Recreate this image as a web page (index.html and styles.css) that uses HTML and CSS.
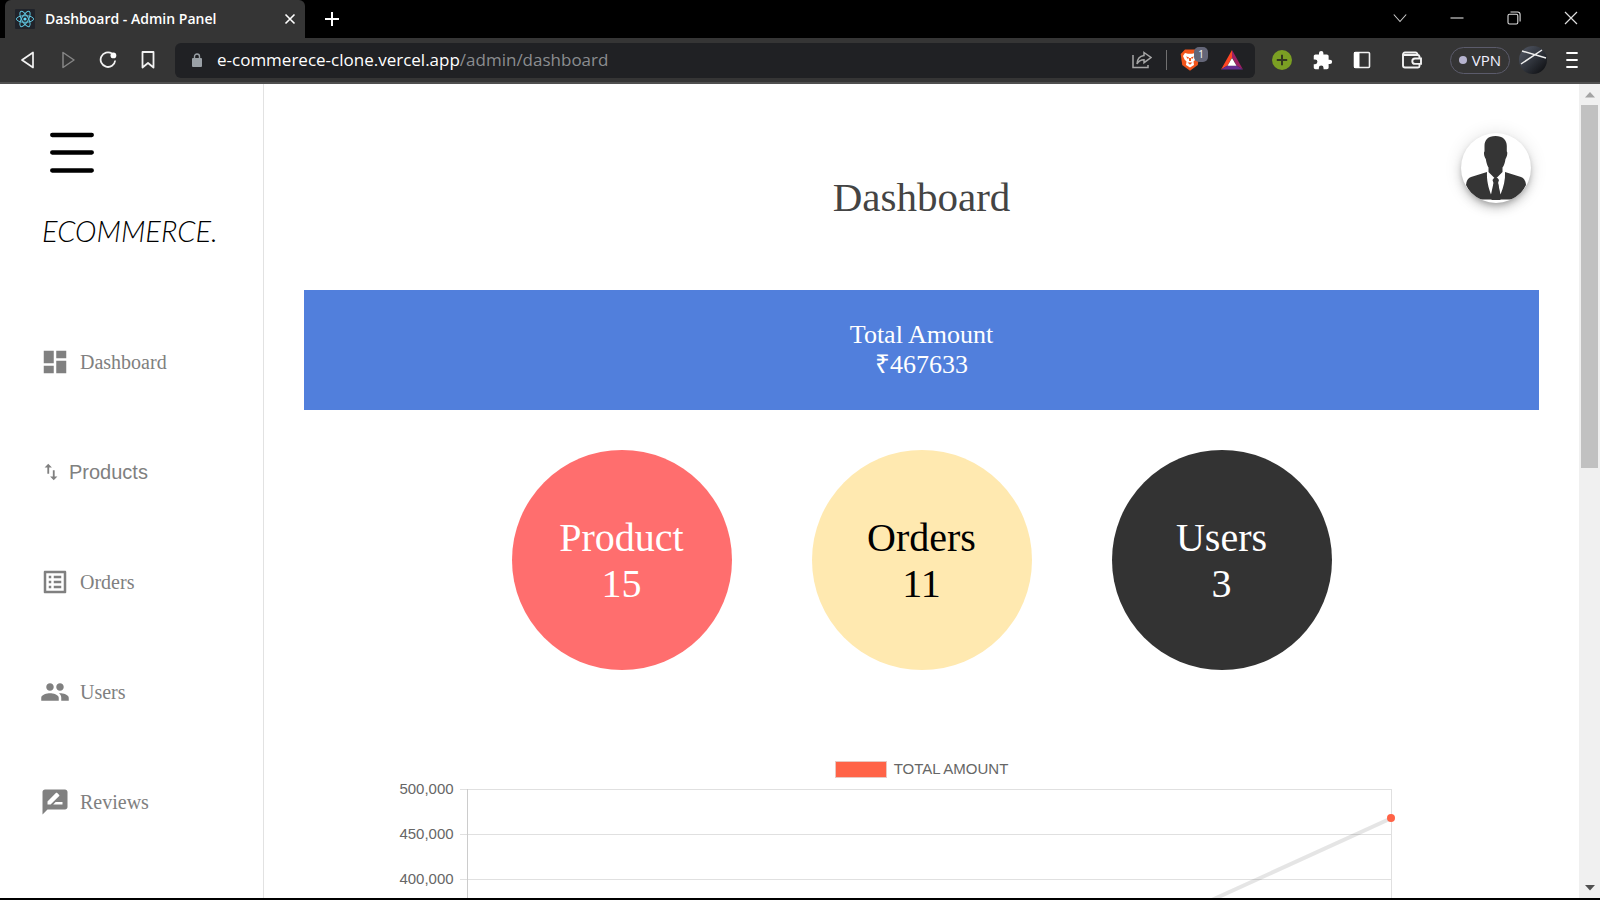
FILE: index.html
```html
<!DOCTYPE html>
<html lang="en">
<head>
<meta charset="utf-8">
<meta name="viewport" content="width=device-width, initial-scale=1">
<title>Dashboard - Admin Panel</title>
<link rel="stylesheet" href="styles.css">
</head>
<body>
<div class="window">
  <header class="tabbar">
    <div class="tab">
      <svg class="favicon" width="20" height="20" viewBox="0 0 20 20"><rect width="20" height="20" rx="1" fill="#20232a"/><g fill="none" stroke="#5fc3dc" stroke-width="1"><ellipse cx="10" cy="10" rx="8.6" ry="3.3"/><ellipse cx="10" cy="10" rx="8.6" ry="3.3" transform="rotate(60 10 10)"/><ellipse cx="10" cy="10" rx="8.6" ry="3.3" transform="rotate(120 10 10)"/></g><circle cx="10" cy="10" r="1.6" fill="#61dafb"/></svg>
      <span class="tab-title">Dashboard - Admin Panel</span>
      <button class="tab-close" aria-label="Close tab"><svg width="12" height="12" viewBox="0 0 12 12"><path d="M1.5 1.5l9 9M10.5 1.5l-9 9" stroke="#fff" stroke-width="1.6"/></svg></button>
    </div>
    <button class="new-tab" aria-label="New tab"><svg width="16" height="16" viewBox="0 0 16 16"><path d="M8 1v14M1 8h14" stroke="#fff" stroke-width="2"/></svg></button>
    <div class="window-controls">
      <button aria-label="Search tabs"><svg width="14" height="14" viewBox="0 0 14 14"><path d="M.8 3.5L7 10.5l6.200-7" fill="none" stroke="#ccc" stroke-width="1.100"/></svg></button>
      <button aria-label="Minimize"><svg width="14" height="14" viewBox="0 0 14 14"><path d="M.5 7h13" stroke="#ccc" stroke-width="1.200"/></svg></button>
      <button aria-label="Restore"><svg width="14" height="14" viewBox="0 0 14 14"><g fill="none" stroke="#ddd" stroke-width="1.100"><rect x="1" y="3.200" width="9.800" height="9.800" rx="1.500"/><path d="M3.500 1h7a2.600 2.600 0 0 1 2.600 2.600v7"/></g></svg></button>
      <button aria-label="Close"><svg width="14" height="14" viewBox="0 0 14 14"><path d="M1 1l12 12M13 1L1 13" stroke="#ddd" stroke-width="1.200"/></svg></button>
    </div>
  </header>

  <div class="toolbar">
    <button class="tool" aria-label="Back"><svg width="18" height="18" viewBox="0 0 18 18"><path d="M14 1.500v15L3 9z" fill="none" stroke="#f2f2f2" stroke-width="1.700" stroke-linejoin="round"/></svg></button>
    <button class="tool" aria-label="Forward"><svg width="18" height="18" viewBox="0 0 18 18"><path d="M4 1.500v15L15 9z" fill="none" stroke="#858585" stroke-width="1.500" stroke-linejoin="round"/></svg></button>
    <button class="tool" aria-label="Reload"><svg width="18" height="18" viewBox="0 0 18 18"><path d="M13 2.600A7.300 7.300 0 1 0 16.200 9.500" fill="none" stroke="#f2f2f2" stroke-width="1.800"/><circle cx="14.400" cy="4.400" r="2.900" fill="#fff"/></svg></button>
    <button class="tool" aria-label="Bookmark"><svg width="18" height="18" viewBox="0 0 18 18"><path d="M3.500 1h11v15.500L9 12l-5.500 4.500z" fill="none" stroke="#f2f2f2" stroke-width="1.800" stroke-linejoin="round"/></svg></button>
    <div class="address">
      <svg class="lock" width="12" height="14" viewBox="0 0 12 14"><rect x="1" y="5" width="10" height="9" rx="1" fill="#9aa0a6"/><path d="M3.500 6V3.500a2.500 2.500 0 0 1 5 0V6" fill="none" stroke="#9aa0a6" stroke-width="1.400"/></svg>
      <div class="url" role="textbox" aria-label="Address">e-commerece-clone.vercel.app<span class="url-path">/admin/dashboard</span></div>
      <button class="share" aria-label="Share"><svg width="20" height="20" viewBox="0 0 20 20"><g fill="none" stroke="#a6a6a6" stroke-width="1.500"><path d="M1 5v12.500h15V15"/><path d="M12 2.500l7 5-7 5.200V9.800C8.500 9.800 6.500 11 5 14c.2-5 2.500-8 7-8.500z"/></g></svg></button>
      <span class="divider"></span>
      <button class="shield" aria-label="Brave Shields">
        <svg width="20" height="22" viewBox="0 0 20 22"><path d="M5 .5h10L19.300 5l-1.500 11L10 21.800 2.200 16 .7 5z" fill="#f2551b"/><path d="M5 4l3 .8h4l3-.8 2 3-1.500 3.500-2 2 .5 3.500-4 2.500L6 16l.5-3.500-2-2L3 7z" fill="#fff"/><path d="M6 7.500l3 .8-1 2zM14 7.500l-3 .8 1 2zM9 9h2v3H9zM7.500 13.500h5L10 15.800z" fill="#f2551b"/></svg>
        <span class="badge">1</span>
      </button>
      <button class="rewards" aria-label="Brave Rewards"><svg width="22" height="20" viewBox="0 0 22 20"><path d="M11 0L0 19.500l6.500-4L11 7.500z" fill="#ff4724"/><path d="M11 0l11 19.500-6.500-4L11 7.500z" fill="#9e1f63"/><path d="M0 19.500h22l-6.500-4h-9z" fill="#662d91"/><path d="M11 8l4.500 7.700h-9z" fill="#fff"/></svg></button>
    </div>
    <button class="tool" aria-label="Add extension"><svg width="20" height="20" viewBox="0 0 20 20"><circle cx="10" cy="10" r="10" fill="#7b9f23"/><path d="M10 4.800v10.400M4.800 10h10.400" stroke="#33381f" stroke-width="2"/></svg></button>
    <button class="tool" aria-label="Extensions"><svg width="21" height="21" viewBox="0 0 24 24"><path fill="#fff" d="M20.500 11H19V7c0-1.100-.9-2-2-2h-4V3.500a2.500 2.500 0 0 0-5 0V5H4c-1.100 0-2 .9-2 2v3.800h1.500a2.700 2.700 0 0 1 0 5.400H2V20c0 1.100.9 2 2 2h3.800v-1.500a2.700 2.700 0 0 1 5.400 0V22H17c1.100 0 2-.9 2-2v-4h1.500a2.500 2.500 0 0 0 0-5z"/></svg></button>
    <button class="tool" aria-label="Sidebar"><svg width="18" height="18" viewBox="0 0 18 18"><rect x="1.500" y="1.500" width="15" height="15" rx="1" fill="none" stroke="#f2f2f2" stroke-width="1.600"/><path d="M1 1h5.500v16H1z" fill="#fff"/></svg></button>
    <button class="tool wallet" aria-label="Wallet"><svg width="20" height="18" viewBox="0 0 20 18"><g fill="none" stroke="#f2f2f2" stroke-width="1.900"><path d="M17.500 7.500V5.500A2 2 0 0 0 15.500 4H2"/><path d="M15.500 4V3.500A2 2 0 0 0 13.500 1.500H3a2 2 0 0 0-2 2v11a2 2 0 0 0 2 2h13a1.500 1.500 0 0 0 1.500-1.500V13"/><path d="M19 7.500h-6a2.700 2.700 0 0 0 0 5.400h6z"/></g></svg></button>
    <button class="vpn"><span class="vpn-dot"></span>VPN</button>
    <button class="profile" aria-label="Profile"><svg width="28" height="28" viewBox="0 0 28 28"><defs><linearGradient id="pg" x1="0" y1="0" x2="1" y2="1"><stop offset="0" stop-color="#555b68"/><stop offset=".5" stop-color="#30343c"/><stop offset="1" stop-color="#08090b"/></linearGradient></defs><circle cx="14" cy="14" r="14" fill="url(#pg)"/><path d="M2 18L23 4M3 5l24 7" stroke="#eee" stroke-width="1.500"/></svg></button>
    <button class="tool menu" aria-label="Menu"><svg width="12" height="18" viewBox="0 0 12 18"><path d="M1 2h10M1 9h10M1 16h10" stroke="#fff" stroke-width="1.800" stroke-linecap="round"/></svg></button>
  </div>

  <div class="page">
    <aside class="sidebar">
      <button class="hamburger" aria-label="Toggle menu"><svg width="44" height="42" viewBox="0 0 44 42"><path d="M2.200 3h39.600M2.200 20.500h39.600M2.200 38.500h39.600" stroke="#000" stroke-width="4.300" stroke-linecap="round"/></svg></button>
      <a class="logo" href="#">ECOMMERCE.</a>
      <nav class="nav">
        <a href="#"><svg width="30" height="30" viewBox="0 0 24 24"><path d="M3 13h8V3H3v10zm0 8h8v-6H3v6zm10 0h8V11h-8v10zm0-18v6h8V3h-8z"/></svg>Dashboard</a>
        <a class="nav-tree" href="#"><svg width="22" height="22" viewBox="0 0 24 24"><path d="M9 3L5 6.990h3V14h2V6.990h3L9 3zm7 14.010V10h-2v7.010h-3L15 21l4-3.990h-3z"/></svg>Products</a>
        <a href="#"><svg width="30" height="30" viewBox="0 0 24 24"><path d="M19 5v14H5V5h14m1.100-2H3.900c-.5 0-.9.4-.9.900v16.200c0 .4.4.9.900.900h16.200c.4 0 .900-.5.900-.900V3.900c0-.5-.5-.9-.9-.9zM11 7h6v2h-6V7zm0 4h6v2h-6v-2zm0 4h6v2h-6zM7 7h2v2H7zm0 4h2v2H7zm0 4h2v2H7z"/></svg>Orders</a>
        <a href="#"><svg width="30" height="30" viewBox="0 0 24 24"><path d="M16 11c1.660 0 2.990-1.340 2.990-3S17.660 5 16 5c-1.660 0-3 1.340-3 3s1.340 3 3 3zm-8 0c1.660 0 2.990-1.340 2.990-3S9.660 5 8 5C6.340 5 5 6.340 5 8s1.340 3 3 3zm0 2c-2.330 0-7 1.170-7 3.500V19h14v-2.500c0-2.330-4.670-3.500-7-3.500zm8 0c-.290 0-.620.020-.970.050 1.160.840 1.970 1.970 1.970 3.450V19h6v-2.500c0-2.330-4.670-3.500-7-3.500z"/></svg>Users</a>
        <a href="#"><svg width="30" height="30" viewBox="0 0 24 24"><path d="M20 2H4c-1.100 0-1.990.900-1.990 2L2 22l4-4h14c1.100 0 2-.900 2-2V4c0-1.100-.900-2-2-2zM6 14v-2.470l6.880-6.880c.2-.2.510-.2.710 0l1.770 1.770c.2.2.2.510 0 .710L8.470 14H6zm12 0h-7.500l2-2H18v2z"/></svg>Reviews</a>
      </nav>
    </aside>

    <main class="main">
      <h1 class="title">Dashboard</h1>
      <section class="banner">
        <p>Total Amount</p>
        <p>₹467633</p>
      </section>
      <section class="circles">
        <a class="circle product" href="#"><span>Product</span><span>15</span></a>
        <a class="circle orders" href="#"><span>Orders</span><span>11</span></a>
        <a class="circle users" href="#"><span>Users</span><span>3</span></a>
      </section>
      <section class="chart">
        <div class="legend"><span class="swatch"></span>TOTAL AMOUNT</div>
        <div class="plot">
          <div class="tick"><span class="tick-label">500,000</span><span class="grid-line"></span></div>
          <div class="tick"><span class="tick-label">450,000</span><span class="grid-line"></span></div>
          <div class="tick"><span class="tick-label">400,000</span><span class="grid-line"></span></div>
          <div class="series">
            <svg class="series-line" viewBox="0 0 100 450" preserveAspectRatio="none"><path d="M0 450L100 29" fill="none" stroke="#000" stroke-opacity=".1" stroke-width="4" vector-effect="non-scaling-stroke"/></svg>
            <span class="point"></span>
          </div>
        </div>
      </section>
      <button class="avatar" aria-label="Account"><svg width="70" height="70" viewBox="0 0 70 70"><g fill="#353535"><path d="M34.500 3C27 3 23.500 7 23.500 13v5.500c-1 .5-.5 5 1.300 7.500.6 4 1.500 6.500 2.700 8.500V39l7 7 7-7v-4.500c1.500-2 2.400-4.500 3-8.500 1.800-2.500 2.300-7 1.300-7.500V13c0-6-4-10-11.300-10z"/><path d="M26 39L10 44c-3 1-4.500 3.500-5 8 3 6 6.500 10.500 12 14.500h36c5.500-4 9-8.500 12-14.500-.5-4.500-2-7-5-8l-16-5c.5 8-1.500 15-4.500 22.500L37 50l1-3-1.500-2h-3.500L31.500 47l1 3-2.500 11.500C27.500 55 25.500 47 26 39z"/><path d="M33 49h4l2.500 18h-9z"/></g></svg></button>
    </main>

    <div class="scrollbar">
      <svg width="10" height="6" viewBox="0 0 10 6"><path d="M5 0l5 5.500H0z" fill="#a3a3a3"/></svg>
      <div class="track"><div class="thumb"></div></div>
      <svg width="10" height="6" viewBox="0 0 10 6"><path d="M0 0h10L5 5.500z" fill="#505050"/></svg>
    </div>
  </div>
</div>
</body>
</html>
```

FILE: styles.css
```css
* { box-sizing: border-box; margin: 0; padding: 0; }
body { background: #fff; overflow: hidden; }
button { border: 0; background: none; font: inherit; color: inherit; display: flex; align-items: center; justify-content: center; }
a { color: inherit; text-decoration: none; }
svg { display: block; flex: none; }

.window {
  height: 100vh;
  display: flex;
  flex-direction: column;
  border-bottom: 2px solid #000;
}

/* Browser frame */
.tabbar {
  flex: none;
  height: 38px;
  display: flex;
  padding: 0 1px 0 5px;
  background: #000;
  color: #fff;
  font-family: "Open Sans", "Noto Sans", sans-serif;
}
.tab {
  width: 300px;
  display: flex;
  align-items: center;
  padding: 0 7px 1px 10px;
  background: #353535;
  border-radius: 6px 6px 0 0;
}
.tab-title { flex: 1; margin-left: 10px; font-size: 14px; font-weight: 600; white-space: nowrap; }
.tab-close { width: 16px; height: 16px; }
.new-tab { width: 54px; padding-bottom: 1px; }
.window-controls { display: flex; margin-left: auto; padding-bottom: 2px; }
.window-controls button { width: 57px; }

.toolbar {
  flex: none;
  height: 46px;
  display: flex;
  align-items: center;
  padding: 0 8px;
  background: #353535;
  border-bottom: 2px solid #505050;
  font-family: "Open Sans", "Noto Sans", sans-serif;
}
.tool { width: 40px; height: 36px; }
.address {
  flex: 1;
  height: 35px;
  display: flex;
  align-items: center;
  margin: 0 7px;
  padding: 0 12px 0 16px;
  background: #202124;
  border-radius: 6px;
}
.url { flex: 1; margin-left: 14px; color: #fff; font-size: 17px; line-height: 22px; white-space: nowrap; }
.url-path { color: #8b8d90; }
.divider { width: 1px; height: 20px; margin: 0 13px 0 14px; background: #707070; }
.shield { position: relative; margin-right: 21px; }
.badge {
  position: absolute;
  left: 14px;
  top: -2px;
  width: 14px;
  height: 15px;
  border-radius: 5px;
  background: #646678;
  color: #fff;
  font-size: 10px;
  line-height: 15px;
}
.wallet { margin-left: 10px; }
.vpn {
  width: 60px;
  height: 27px;
  gap: 5px;
  margin: 0 9px 0 18px;
  border: 1px solid #5b5b6b;
  border-radius: 14px;
  color: #f0f0ff;
  font-size: 15px;
}
.vpn-dot { width: 8px; height: 8px; border-radius: 50%; background: #b6b4cf; }
.menu { margin-left: 5px; }

/* Page */
.page {
  flex: 1;
  min-height: 0;
  display: flex;
  overflow: hidden;
  font-family: "Liberation Serif", "Times New Roman", serif;
}
.sidebar {
  flex: none;
  width: 264px;
  padding: 48px 40px 0;
  border-right: 1px solid #e2e2e2;
}
.hamburger { margin-left: 10px; }
.logo {
  display: block;
  margin-top: 41px;
  padding-left: 2px;
  color: #000;
  font: italic 300 29px/32px "Segoe Print", "Lato", sans-serif;
}
.nav { display: flex; flex-direction: column; gap: 80px; margin-top: 100px; }
.nav a {
  display: flex;
  align-items: center;
  gap: 10px;
  height: 30px;
  color: #808080;
  font-size: 20px;
}
.nav a.nav-tree { gap: 7px; font-family: "Liberation Sans", Arial, sans-serif; }
.nav svg { fill: #808080; }

.main { position: relative; flex: 1; min-width: 0; padding: 90px 40px 0; }
.title {
  color: #444;
  font-size: 41px;
  font-weight: 400;
  line-height: 46px;
  text-align: center;
}
.banner {
  margin-top: 70px;
  padding: 30px;
  background: #517fdc;
  color: #fff;
  font-size: 26px;
  line-height: 30px;
  text-align: center;
}
.circles { display: flex; justify-content: center; gap: 80px; margin-top: 40px; }
.circle {
  width: 220px;
  height: 220px;
  display: flex;
  flex-direction: column;
  align-items: center;
  justify-content: center;
  padding-top: 2px;
  border-radius: 50%;
  font-size: 40px;
  line-height: 46px;
}
.product { background: #ff6e6e; color: #fff; }
.orders { background: #ffe9b0; color: #000; }
.users { background: #333; color: #fff; }

.chart {
  width: 85%;
  margin: 90px auto 0;
  color: #666;
  font: 15px/18px "Liberation Sans", Arial, sans-serif;
}
.legend { display: flex; align-items: center; justify-content: center; gap: 7px; }
.swatch { width: 52px; height: 17px; background: tomato; border: 1px solid #e8c8c2; }
.plot { position: relative; margin-top: 2px; padding-right: 54px; }
.tick { display: flex; align-items: center; height: 18px; margin-bottom: 27px; }
.tick-label { flex: none; width: 63px; padding-right: 6px; text-align: right; }
.grid-line { flex: 1; height: 1px; background: #e0e0e0; }
.series {
  position: absolute;
  top: 9px;
  left: 70px;
  right: 54px;
  height: 450px;
  border-left: 1px solid #ccc;
  border-right: 1px solid #e0e0e0;
}
.series-line { width: 100%; height: 100%; }
.point {
  position: absolute;
  right: -4px;
  top: 25px;
  width: 8px;
  height: 8px;
  border-radius: 50%;
  background: tomato;
}

.avatar {
  position: absolute;
  top: 49px;
  right: 48px;
  width: 70px;
  height: 70px;
  overflow: hidden;
  border-radius: 50%;
  background: #fff;
  box-shadow: 0 3px 5px -1px rgba(0, 0, 0, .2), 0 6px 10px rgba(0, 0, 0, .14), 0 1px 18px rgba(0, 0, 0, .12);
}

.scrollbar {
  flex: none;
  width: 21px;
  display: flex;
  flex-direction: column;
  align-items: center;
  justify-content: space-between;
  padding: 8px 2px 7px;
  background: #f0f0f0;
}
.track { flex: 1; width: 100%; padding: 7px 0; }
.thumb { height: 47%; background: #c1c1c1; }
```
